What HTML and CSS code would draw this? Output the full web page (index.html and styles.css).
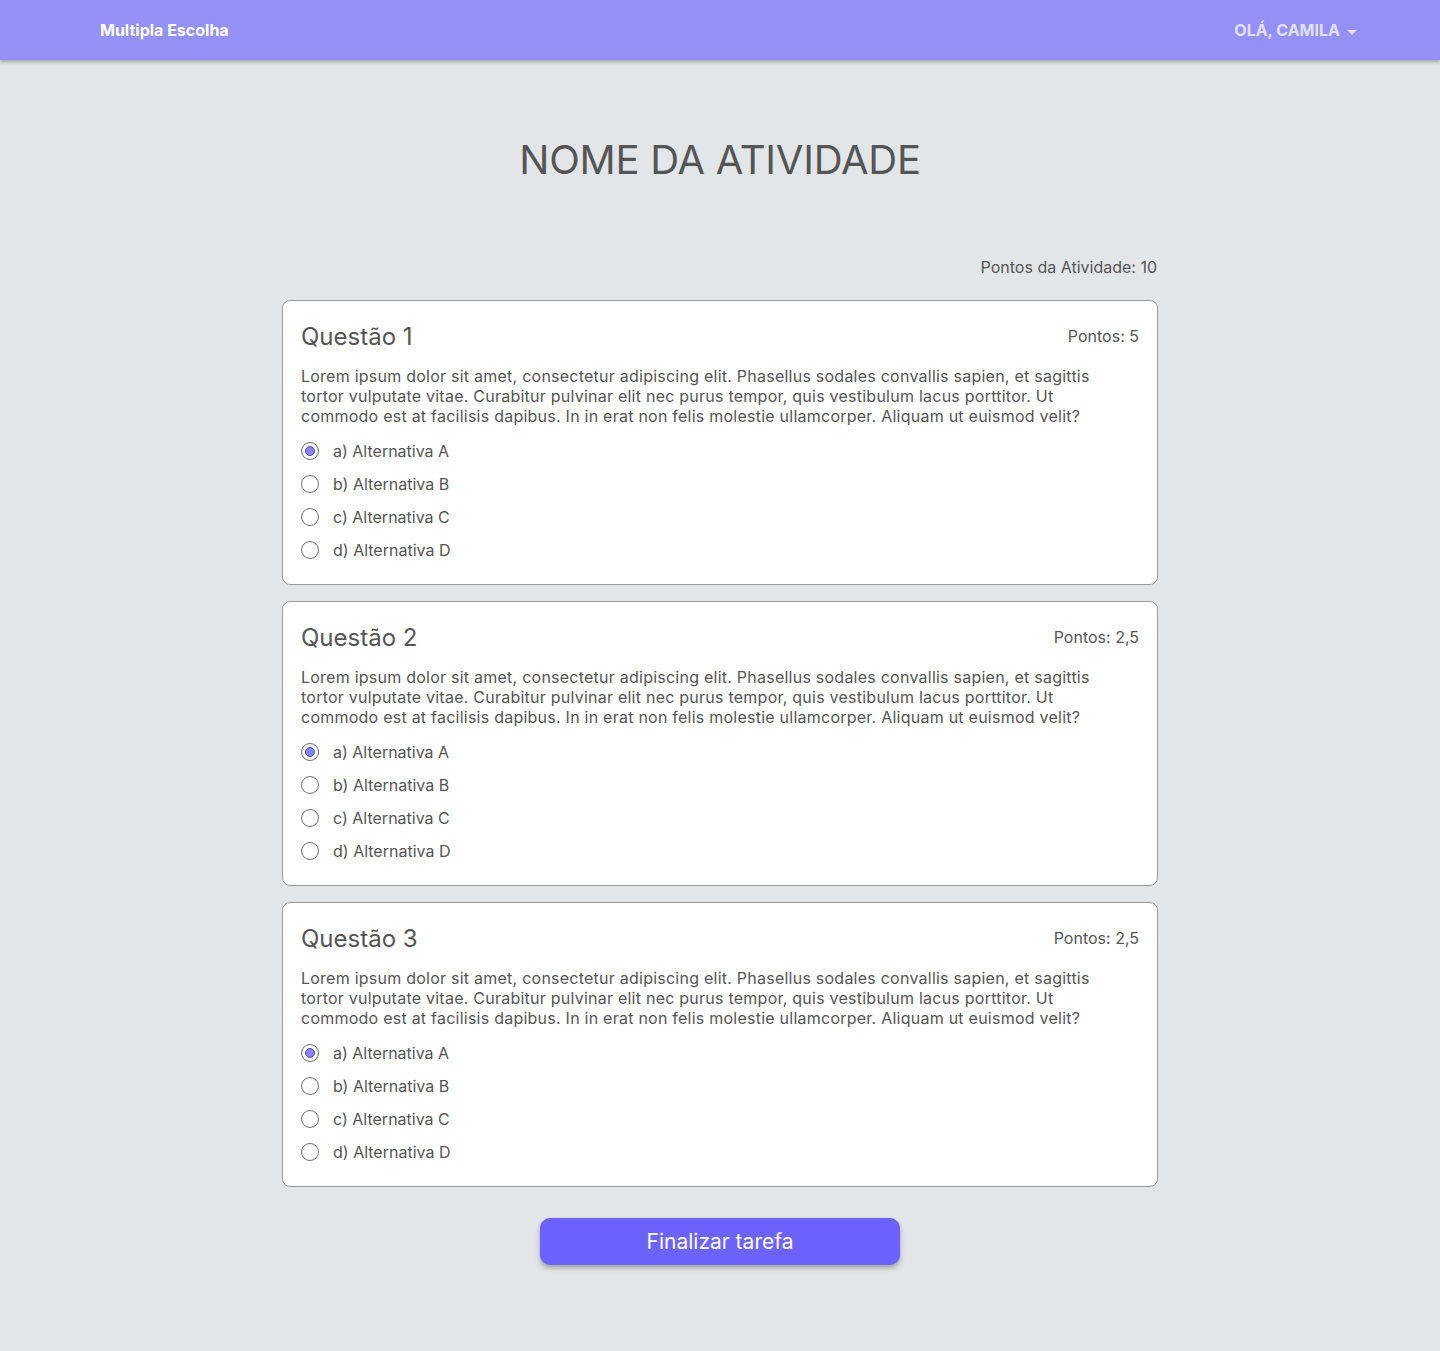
FILE: index.html
```html
<!DOCTYPE html>
<html lang="pt">
<head>
<meta charset="utf-8">
<title>Multipla Escolha</title>
<link rel="stylesheet" href="styles.css">
</head>
<body>
<header class="navbar">
  <div class="brand">Multipla Escolha</div>
  <div class="user">OLÁ, CAMILA <span class="caret"></span></div>
</header>
<main class="page">
  <h1 class="title">NOME DA ATIVIDADE</h1>
  <div class="total">Pontos da Atividade: 10</div>

  <section class="card">
    <div class="card-head"><h2>Questão 1</h2><span class="pts">Pontos: 5</span></div>
    <p class="text">Lorem ipsum dolor sit amet, consectetur adipiscing elit. Phasellus sodales convallis sapien, et sagittis tortor vulputate vitae. Curabitur pulvinar elit nec purus tempor, quis vestibulum lacus porttitor. Ut commodo est at facilisis dapibus. In in erat non felis molestie ullamcorper. Aliquam ut euismod velit?</p>
    <ul class="options">
      <li><span class="radio checked"></span>a) Alternativa A</li>
      <li><span class="radio"></span>b) Alternativa B</li>
      <li><span class="radio"></span>c) Alternativa C</li>
      <li><span class="radio"></span>d) Alternativa D</li>
    </ul>
  </section>

  <section class="card">
    <div class="card-head"><h2>Questão 2</h2><span class="pts">Pontos: 2,5</span></div>
    <p class="text">Lorem ipsum dolor sit amet, consectetur adipiscing elit. Phasellus sodales convallis sapien, et sagittis tortor vulputate vitae. Curabitur pulvinar elit nec purus tempor, quis vestibulum lacus porttitor. Ut commodo est at facilisis dapibus. In in erat non felis molestie ullamcorper. Aliquam ut euismod velit?</p>
    <ul class="options">
      <li><span class="radio checked"></span>a) Alternativa A</li>
      <li><span class="radio"></span>b) Alternativa B</li>
      <li><span class="radio"></span>c) Alternativa C</li>
      <li><span class="radio"></span>d) Alternativa D</li>
    </ul>
  </section>

  <section class="card">
    <div class="card-head"><h2>Questão 3</h2><span class="pts">Pontos: 2,5</span></div>
    <p class="text">Lorem ipsum dolor sit amet, consectetur adipiscing elit. Phasellus sodales convallis sapien, et sagittis tortor vulputate vitae. Curabitur pulvinar elit nec purus tempor, quis vestibulum lacus porttitor. Ut commodo est at facilisis dapibus. In in erat non felis molestie ullamcorper. Aliquam ut euismod velit?</p>
    <ul class="options">
      <li><span class="radio checked"></span>a) Alternativa A</li>
      <li><span class="radio"></span>b) Alternativa B</li>
      <li><span class="radio"></span>c) Alternativa C</li>
      <li><span class="radio"></span>d) Alternativa D</li>
    </ul>
  </section>

  <div class="actions"><button class="finish">Finalizar tarefa</button></div>
</main>
</body>
</html>
```
FILE: styles.css
```css
* { box-sizing: border-box; }
html, body { margin: 0; padding: 0; }
body {
  background: #e3e6e8;
  font-family: Inter, "Noto Sans", sans-serif;
  color: #555555;
  min-height: 1351px;
}
.navbar {
  height: 60px;
  background: #9390f6;
  display: flex;
  align-items: center;
  justify-content: space-between;
  padding: 0 83px 0 100px;
  box-shadow: 0 2px 4px rgba(0,0,0,0.3);
  position: relative;
}
.brand {
  color: #ffffff;
  font-weight: 700;
  font-size: 16px;
}
.user {
  color: #e2e0fd;
  font-weight: 700;
  font-size: 16px;
  display: flex;
  align-items: center;
}
.caret {
  display: inline-block;
  width: 0; height: 0;
  border-left: 5px solid transparent;
  border-right: 5px solid transparent;
  border-top: 5px solid #e2e0fd;
  margin-left: 7px;
  margin-top: 4px;
}
.page {
  width: 876px;
  margin: 0 auto;
  padding-bottom: 86px;
}
.title {
  margin: 76px 0 0;
  text-align: center;
  font-size: 40px;
  line-height: 48px;
  font-weight: 400;
  letter-spacing: -0.25px;
  color: #555555;
}
.total {
  margin-top: 73px;
  text-align: right;
  font-size: 16px;
  line-height: 20px;
  padding-right: 1px;
}
.card {
  margin-top: 23px;
  background: #ffffff;
  border: 1px solid #9a9a9a;
  border-radius: 8px;
  padding: 21px 18px 18px 18px;
}
.card + .card { margin-top: 16px; }
.card-head {
  display: flex;
  justify-content: space-between;
  align-items: center;
}
.card-head h2 {
  margin: 0;
  font-size: 24px;
  line-height: 30px;
  font-weight: 400;
  color: #555555;
}
.pts {
  font-size: 16px;
  line-height: 20px;
  margin-top: -3px;
}
.text {
  margin: 14px 0 0;
  padding-right: 40px;
  font-size: 16px;
  line-height: 20px;
  letter-spacing: 0.24px;
}
.options {
  list-style: none;
  margin: 8px 0 0;
  padding: 0;
}
.options li {
  height: 33px;
  display: flex;
  align-items: center;
  font-size: 16px;
}
.radio {
  width: 18px;
  height: 18px;
  border: 1px solid #6e6e6e;
  border-radius: 50%;
  margin-right: 14px;
  display: flex;
  align-items: center;
  justify-content: center;
}
.radio.checked::after {
  content: "";
  width: 10px;
  height: 10px;
  border-radius: 50%;
  background: #8884f4;
  border: 1px solid #4f4bc8;
  box-sizing: border-box;
}
.actions {
  margin-top: 31px;
  display: flex;
  justify-content: center;
}
.finish {
  width: 360px;
  height: 47px;
  border: none;
  border-radius: 10px;
  background: #6c63ff;
  color: #ffffff;
  font-family: Inter, "Noto Sans", sans-serif;
  font-size: 21px;
  padding: 0;
  box-shadow: 0 3px 5px rgba(0,0,0,0.3);
}
```
